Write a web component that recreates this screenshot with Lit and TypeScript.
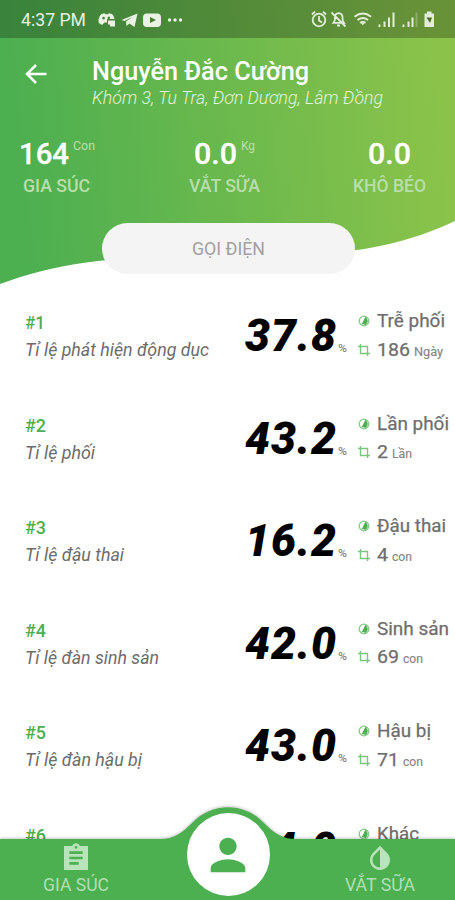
import { LitElement, html, svg, css } from "lit";
import { customElement } from "lit/decorators.js";

interface Metric { label: string; value: string; name: string; count: string; unit: string; }

const METRICS: Metric[] = [
  { label: "Tỉ lệ phát hiện động dục", value: "37.8", name: "Trễ phối", count: "186", unit: "Ngày" },
  { label: "Tỉ lệ phối", value: "43.2", name: "Lần phối", count: "2", unit: "Lần" },
  { label: "Tỉ lệ đậu thai", value: "16.2", name: "Đậu thai", count: "4", unit: "con" },
  { label: "Tỉ lệ đàn sinh sản", value: "42.0", name: "Sinh sản", count: "69", unit: "con" },
  { label: "Tỉ lệ đàn hậu bị", value: "43.0", name: "Hậu bị", count: "71", unit: "con" },
  { label: "Tỉ lệ khác", value: "14.0", name: "Khác", count: "24", unit: "con" },
];

/* Text drawn to a fixed advance width, so that labels keep their measure. */
const line = (cls: string, text: string, width: number, height: number, base: number, adjust = "spacingAndGlyphs") =>
  html`<svg class="t ${cls}" width=${width} height=${height}>${svg`<text x="0" y=${base} textLength=${width} lengthAdjust=${adjust}>${text}</text>`}</svg>`;

const LABEL_W = [184, 70, 99, 134, 117, 72];
const NAME_W = [68, 72, 69, 72, 54, 42];
const COUNT_W = [33, 11, 11, 22, 22, 22];
const UNIT_W = [29, 20, 20, 20, 20, 20];

@customElement("app-root")
export class AppRoot extends LitElement {
  static styles = css`
    :host { display: block; width: 455px; height: 900px; position: relative; overflow: hidden; background: #fff; font-family: Roboto, "Noto Sans", sans-serif; }
    svg { display: block; flex: none; overflow: visible; }
    .hero { height: 300px; position: relative; }
    .wave { position: absolute; left: 0; top: 0; }
    .content { position: relative; }
    .status { height: 38px; display: flex; align-items: center; background: rgba(0, 0, 0, .25); }
    .title { display: flex; height: 92px; box-sizing: border-box; padding: 20px 0 0 24px; }
    .back { margin-top: 4px; margin-right: 43px; }
    .t { white-space: pre; }
    .clock { font-size: 18.5px; fill: #e5f1e2; margin-left: 21px; }
    .who { font-size: 25.5px; font-weight: 500; fill: #fff; }
    .where { font-size: 17.5px; font-style: italic; font-weight: 300; fill: #e2f3da; }
    .stats { display: grid; grid-template-columns: 113px 223px 107px; height: 93px; }
    .stat { display: flex; flex-direction: column; align-items: center; }
    .num { display: flex; gap: 4px; }
    .big { font-size: 30px; font-weight: 500; fill: #fff; stroke: #fff; stroke-width: .3px; }
    .sup { font-size: 13.5px; fill: #b9e0a8; }
    .cap { font-size: 18px; font-weight: 500; fill: #b8dfa9; }
    .call { display: flex; justify-content: center; width: 253px; height: 51px; margin-left: 102px; border-radius: 26px; background: #f4f4f4; }
    .calltext { font-size: 18.5px; fill: #a0a0a0; margin-top: 14px; }
    .list { display: flex; flex-direction: column; }
    .row { display: grid; grid-template-columns: 219px 119px 20px 1fr; height: 102.6px; }
    .left { padding: 11px 0 0 25px; }
    .rank { font-size: 18px; font-weight: 500; fill: #4caf50; }
    .label { font-size: 17.5px; font-style: italic; fill: #6c6c6c; }
    .value { font-size: 44.5px; font-weight: 900; font-style: italic; fill: #000; margin-left: 26px; }
    .pct { font-size: 11.5px; font-weight: 500; fill: #858585; margin-top: 34px; }
    .right { padding-top: 9px; }
    .pair { display: flex; height: 28.5px; align-items: flex-start; }
    .mini { margin: 6px 7px 0 0; }
    .name { font-size: 18.5px; fill: #6e6e6e; stroke: #6e6e6e; stroke-width: .25px; }
    .count { font-size: 19px; fill: #6e6e6e; stroke: #6e6e6e; stroke-width: .25px; }
    .unit { font-size: 12.5px; fill: #858585; stroke: #858585; stroke-width: .15px; margin-left: 4px; }
    .nav { position: absolute; left: 0; bottom: 0; width: 455px; height: 100px; }
    .navbg { position: absolute; left: 0; top: 0; filter: drop-shadow(0 -1px 1.5px rgba(0, 0, 0, .22)); }
    .tabs { position: relative; display: grid; grid-template-columns: 152px 152px 151px; height: 100px; }
    .tab { display: flex; flex-direction: column; align-items: center; padding-top: 42px; }
    .navtext { font-size: 18.5px; fill: #b1dfb3; }
    .center { display: flex; justify-content: center; padding-top: 13px; }
    .fab { width: 83px; height: 83px; border-radius: 50%; background: #fff; display: flex; align-items: center; justify-content: center; }
  `;

  private statusBar() {
    return html`<div class="status">
      ${line("clock", "4:37 PM", 65, 22, 18)}
      <svg width="303" height="38" viewBox="0 0 303 38">
        <path fill="#e9f2e3" fill-rule="evenodd" d="M13.500 23.500q-1.500-1-1-4 .8-4 3-5.500l3-.7 1 1h2.500l1-1 3 .7q1.800 1.500 2.500 5h-7.500v3.500h-2.500l-2.500 2.500zM17.500 16.700a1.400 1.400 0 1 0 .1 0zM22.800 16.500a1.300 1.300 0 1 0 .1 0z"/>
        <g fill="#e9f2e3">
          <path d="M23 20.500h6v6h-5v-2h-2v-4z"/>
          <path d="M35.500 20l16-6.500-3 13.500-5-3.500-3 2.500-.5-4.500 6.500-4.500-8 4z"/>
          <rect x="57" y="13.500" width="18" height="13.500" rx="4"/>
          <circle cx="83.500" cy="20" r="1.700"/><circle cx="89" cy="20" r="1.700"/><circle cx="94.500" cy="20" r="1.700"/>
        </g>
        <path d="M64 17l6 3-6 3z" fill="#457f32"/>
      </svg>
    </div>`;
  }

  private statusRight() {
    return svg`<g fill="none" stroke="#e3edda" stroke-width="1.800">
      <circle cx="319" cy="20" r="6.300"/><path d="M319 16v4.500l3 2M312 14.500l3-2.800M326 14.500l-3-2.800"/>
      <path d="M333.500 22.800h10.500q-1.500-1.700-1.500-3.800v-1.500q0-4-3.800-4.300-3.800 .3-3.800 4.300v1.500q0 2-1.400 3.800zM337 25.500h3M331.500 12.500l14 14"/>
      <path d="M354.500 16.800q8.300-6.500 16.600 0M357.500 20q5.300-4 10.600 0M360 22.800q2.800-2 5.600 0"/>
    </g>
    <g fill="#e3edda"><path d="M360.500 22.500l2.300 2.800 2.300-2.800z"/>
      <path d="M378.500 24.500h2v2.500h-2zM383.500 21.500h2v5.500h-2zM388 17.500h2v9.500h-2zM392.500 12.500h2v14.500h-2zM402.500 24.500h2v2.500h-2zM407.500 21.500h2v5.500h-2zM411.500 17.500h2v9.500h-2z"/>
      <path d="M415.500 12.500h2v14.500h-2z" opacity=".3"/>
      <path d="M424.500 13.500h2.500v-2h4.500v2h2.500v13.500h-9.500z"/></g>
      <path d="M426.500 17.500h5.500l-2 5.500z" fill="#526c2c"/>`;
  }

  private stat(num: string, nw: number, sup: string, sw: number, cap: string, cw: number) {
    return html`<div class="stat">
      <div class="num">${line("big", num, nw, 45, 34)}${sup ? line("sup", sup, sw, 24, 20) : ""}</div>
      ${line("cap", cap, cw, 24, 17)}
    </div>`;
  }

  private row(m: Metric, i: number) {
    return html`<div class="row">
      <div class="left">
        ${line("rank", "#" + (i + 1), i ? 21 : 20, 27, 18)}
        ${line("label", m.label, LABEL_W[i], 24, 17.5)}
      </div>
      ${line("value", m.value, 91, 60, 50.5, "spacing")}
      ${line("pct", "%", 9, 20, 18)}
      <div class="right">
        <div class="pair">
          <svg class="mini" width="12" height="12" viewBox="0 0 12 12"><circle cx="6" cy="6" r="4.800" fill="#fff" stroke="#82ca85" stroke-width="1.300"/><path d="M7.500 2Q12 6 7.500 10L4.500 9z" fill="#4caf50"/><path d="M4 9.500L8 2" stroke="#4caf50"/></svg>
          ${line("name", m.name, NAME_W[i], 26, 18)}
        </div>
        <div class="pair">
          <svg class="mini" width="12" height="12" viewBox="0 0 12 12"><path d="M0 2.500h9.500v9.500M2.500 0v9.500H12" fill="none" stroke="#7cc780" stroke-width="1.400"/></svg>
          ${line("count", m.count, COUNT_W[i], 26, 18)}
          ${line("unit", m.unit, UNIT_W[i], 26, 18)}
        </div>
      </div>
    </div>`;
  }

  render() {
    return html`
      <div class="hero">
        <svg class="wave" width="455" height="300">
          <defs><linearGradient id="g" gradientUnits="userSpaceOnUse" x1="10" y1="100" x2="440" y2="60">
            <stop offset="0" stop-color="#4caf50"/><stop offset="1" stop-color="#8bc34a"/></linearGradient></defs>
          <path d="M0 0H455V221C400 247 340 258 228 257C120 255 62 261 0 284Z" fill="url(#g)"/>
        </svg>
        <div class="content">
          ${this.statusBar()}
          <div class="title">
            <svg class="back" width="25" height="25" viewBox="0 0 25 25"><path d="M22.500 12H4M12 3L3 12l9 9" fill="none" stroke="#fff" stroke-width="2.500"/></svg>
            <div>${line("who", "Nguyễn Đắc Cường", 217, 28, 21.5)}${line("where", "Khóm 3, Tu Tra, Đơn Dương, Lâm Đồng", 291, 24, 18)}</div>
          </div>
          <div class="stats">
            ${this.stat("164", 50, "Con", 22, "GIA SÚC", 67)}
            ${this.stat("0.0", 43, "Kg", 14, "VẮT SỮA", 71)}
            ${this.stat("0.0", 43, "", 0, "KHÔ BÉO", 73)}
          </div>
          <div class="call">${line("calltext", "GỌI ĐIỆN", 73, 24, 18)}</div>
        </div>
        <svg class="wave" width="455" height="38">${this.statusRight()}</svg>
      </div>
      <div class="list">${METRICS.map((m, i) => this.row(m, i))}</div>
      <div class="nav">
        <svg class="navbg" width="455" height="100"><path d="M0 39H160C174 39 182 33 192 23C212 2 244 2 264 23C274 33 282 39 296 39H455V100H0Z" fill="#4caf50"/></svg>
        <div class="tabs">
          <div class="tab">
            <svg width="32" height="32" viewBox="0 0 24 24"><path d="M21 3h-6.180C14.400 1.840 13.300 1 12 1c-1.300 0-2.400.84-2.820 2H3v18h18zm-9 0c.55 0 1 .45 1 1s-.45 1-1 1-1-.45-1-1 .45-1 1-1zm2 14H7v-2h7v2zm3-4H7v-2h10v2zm0-4H7V7h10v2z" fill="#b9e3ba"/></svg>
            ${line("navtext", "GIA SÚC", 66, 24, 17)}
          </div>
          <div class="center"><div class="fab"><svg width="52" height="52" viewBox="0 0 24 24"><path d="M12 12c2.210 0 4-1.790 4-4s-1.790-4-4-4-4 1.790-4 4 1.790 4 4 4zm0 2c-2.670 0-8 1.340-8 4v2h16v-2c0-2.660-5.330-4-8-4z" fill="#4caf50"/></svg></div></div>
          <div class="tab">
            <svg width="30" height="32" viewBox="0 0 24 24"><path d="M17.660 7.930L12 2.270 6.340 7.930c-3.120 3.120-3.120 8.190 0 11.310C7.900 20.800 9.950 21.580 12 21.580s4.100-.78 5.660-2.340c3.120-3.120 3.120-8.190 0-11.310zM12 19.590c-1.600 0-3.110-.62-4.240-1.760C6.620 16.690 6 15.190 6 13.590s.62-3.110 1.760-4.240L12 5.100v14.490z" fill="#b9e3ba"/></svg>
            ${line("navtext", "VẮT SỮA", 70, 24, 17)}
          </div>
        </div>
      </div>`;
  }
}
